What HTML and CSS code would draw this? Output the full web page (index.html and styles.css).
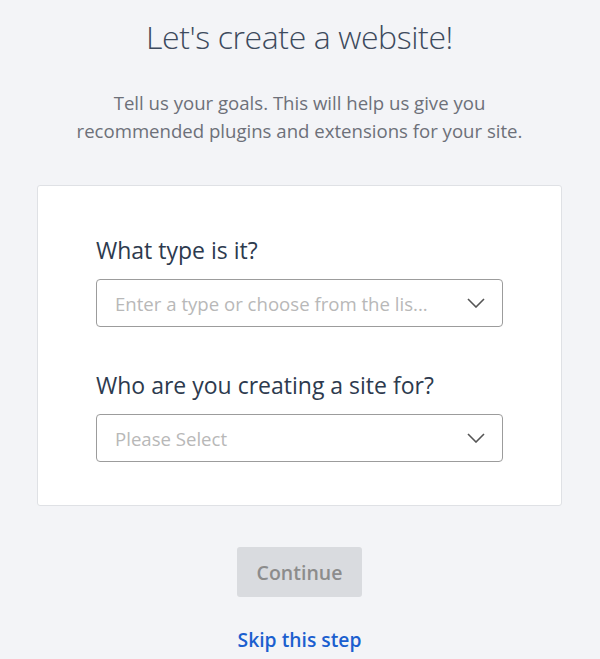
FILE: index.html
```html
<!DOCTYPE html>
<html lang="en">
<head>
<meta charset="utf-8">
<title>Let's create a website!</title>
<link rel="stylesheet" href="styles.css">
</head>
<body>
<main class="page">
  <h1 class="title">Let's create a website!</h1>
  <p class="subtitle">Tell us your goals. This will help us give you<br>recommended plugins and extensions for your site.</p>
  <section class="card">
    <div class="field">
      <label class="label">What type is it?</label>
      <div class="select">
        <span class="placeholder">Enter a type or choose from the lis...</span>
        <svg class="chevron" width="18" height="10" viewBox="0 0 18 10"><path d="M1 1 L9 9 L17 1" fill="none" stroke="#555" stroke-width="1.6"/></svg>
      </div>
    </div>
    <div class="field">
      <label class="label">Who are you creating a site for?</label>
      <div class="select">
        <span class="placeholder">Please Select</span>
        <svg class="chevron" width="18" height="10" viewBox="0 0 18 10"><path d="M1 1 L9 9 L17 1" fill="none" stroke="#555" stroke-width="1.6"/></svg>
      </div>
    </div>
  </section>
  <div class="actions">
    <button class="continue" disabled>Continue</button>
    <a class="skip" href="#">Skip this step</a>
  </div>
</main>
</body>
</html>
```

FILE: styles.css
```css
html, body {
  margin: 0;
  padding: 0;
  background: #f3f4f7;
}
body {
  font-family: "Open Sans", "Noto Sans", sans-serif;
}
.page {
  padding: 14px 38px 0 37px;
  display: flex;
  flex-direction: column;
  align-items: stretch;
}
.title {
  margin: 0;
  font-size: 32px;
  font-weight: 300;
  letter-spacing: -0.4px;
  line-height: 46px;
  color: #3d4a5d;
  text-align: center;
}
.subtitle {
  margin: 29px 0 0;
  font-size: 18.6px;
  line-height: 28px;
  color: #6d7079;
  text-align: center;
}
.card {
  margin-top: 40px;
  background: #fff;
  border: 1px solid #dfe1e5;
  border-radius: 3px;
  padding: 48px 58px 43px;
  display: flex;
  flex-direction: column;
  gap: 42px;
}
.field {
  display: flex;
  flex-direction: column;
  gap: 13px;
}
.label {
  font-size: 23px;
  line-height: 32px;
  color: #2d3a4e;
}
.select {
  box-sizing: border-box;
  height: 48px;
  border: 1px solid #9c9c9c;
  border-radius: 4px;
  display: flex;
  align-items: center;
  justify-content: space-between;
  padding: 0 17px 0 18px;
}
.placeholder {
  font-size: 18.6px;
  color: #b8b8b8;
}
.chevron {
  display: block;
}
.actions {
  display: flex;
  flex-direction: column;
  align-items: center;
  margin-top: 41px;
  gap: 30px;
}
.continue {
  width: 125px;
  height: 50px;
  border: none;
  border-radius: 3px;
  background: #d9dbdf;
  color: #8c8c8c;
  font-family: "Open Sans", "Noto Sans", sans-serif;
  font-size: 19.5px;
  font-weight: 600;
  padding: 0;
}
.skip {
  font-size: 19.3px;
  line-height: 26px;
  font-weight: 600;
  color: #1b5fcf;
  text-decoration: none;
}
```
